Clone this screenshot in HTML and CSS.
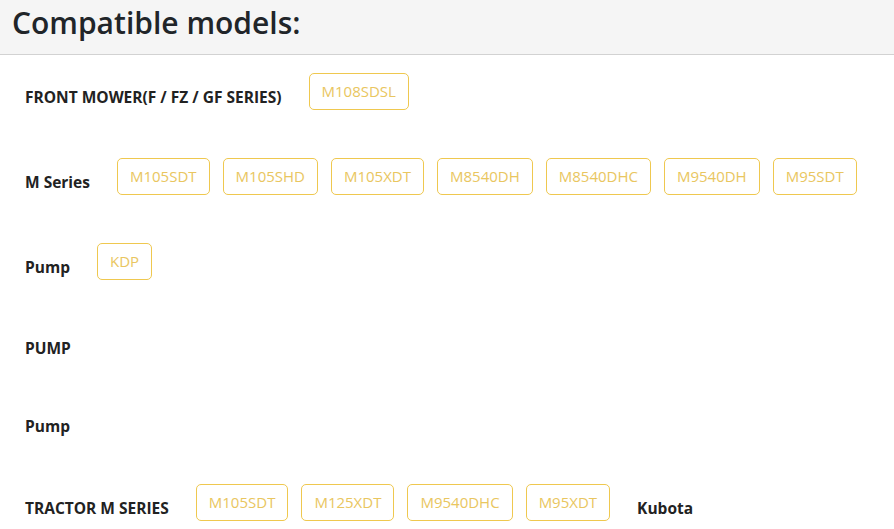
FILE: index.html
```html
<!DOCTYPE html>
<html lang="en">
<head>
  <meta charset="UTF-8">
  <meta name="viewport" content="width=device-width, initial-scale=1.0">
  <title>Compatible models</title>
  <link rel="stylesheet" href="styles.css">
</head>
<body>
  <div class="header">
    <h2>Compatible models:</h2>
  </div>
  <div class="models">
    <div class="row">
      <span class="label">FRONT MOWER(F / FZ / GF SERIES)</span>
      <a class="model">M108SDSL</a>
    </div>
    <div class="row">
      <span class="label">M Series</span>
      <a class="model">M105SDT</a>
      <a class="model">M105SHD</a>
      <a class="model">M105XDT</a>
      <a class="model">M8540DH</a>
      <a class="model">M8540DHC</a>
      <a class="model">M9540DH</a>
      <a class="model">M95SDT</a>
    </div>
    <div class="row">
      <span class="label">Pump</span>
      <a class="model">KDP</a>
    </div>
    <div class="row">
      <span class="label">PUMP</span>
    </div>
    <div class="row">
      <span class="label">Pump</span>
    </div>
    <div class="row">
      <span class="label">TRACTOR M SERIES</span>
      <a class="model">M105SDT</a>
      <a class="model">M125XDT</a>
      <a class="model">M9540DHC</a>
      <a class="model">M95XDT</a>
      <span class="label next">Kubota</span>
    </div>
  </div>
</body>
</html>
```

FILE: styles.css
```css
body {
  margin: 0;
  font-family: "Open Sans", Arial, sans-serif;
  color: #222;
  background: #fff;
}
.header {
  height: 54px;
  padding: 0 12px;
  background-color: #f5f5f5;
  border-bottom: 1px solid #d2d2d2;
}
.header h2 {
  margin: 0;
  font-size: 30px;
  font-weight: 600;
  line-height: 46px;
  color: #212529;
}
.models {
  padding: 18px 0 0 25px;
}
.row {
  display: flex;
  align-items: center;
  gap: 13px;
  margin-bottom: 48px;
}
.label {
  padding-top: 10px;
  margin-right: 14px;
  font-size: 15.5px;
  font-weight: 700;
  line-height: 20px;
  color: #222;
}
.label.next {
  margin-left: 14px;
}
.model {
  height: 37px;
  box-sizing: border-box;
  padding: 0 12px;
  border: 1px solid #efc84f;
  border-radius: 5px;
  font-size: 15px;
  line-height: 35px;
  color: #e9c660;
  cursor: pointer;
}
.model:hover {
  background-color: #fdf6e0;
}
```
